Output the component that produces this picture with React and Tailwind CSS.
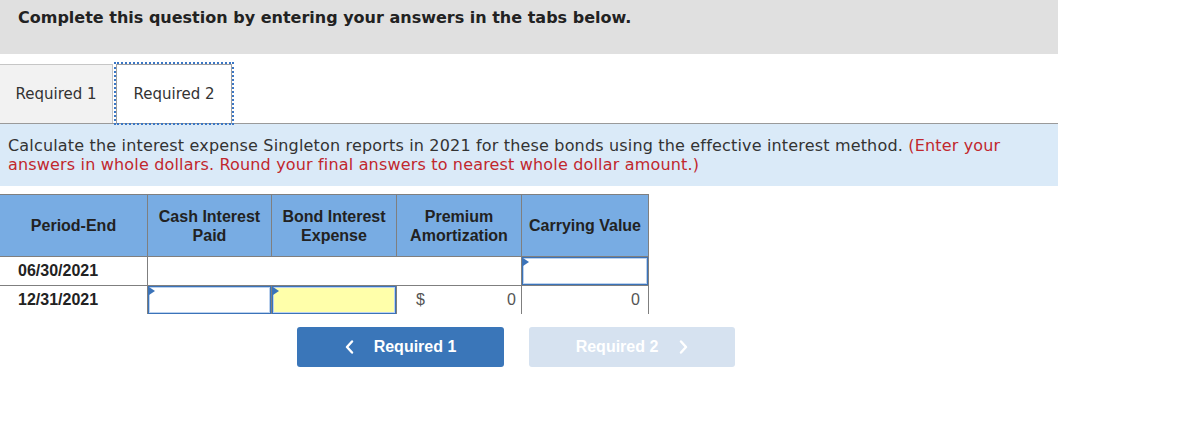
const inputBox = 'relative w-full h-full border border-[#3b73b9] shadow-[inset_0_0_0_1px_#bcd2ee]'

function Flag() {
  return (
    <span className="absolute top-0 left-0 w-0 h-0 border-y-[4px] border-y-transparent border-l-[6px] border-l-[#3b73b9]" />
  )
}

export default function App() {
  return (
    <div className="w-[1188px] h-[424px] bg-white text-[#222] font-['DejaVu_Sans',sans-serif]">
      <div className="w-[1058px]">

        {/* Header */}
        <div className="h-[54px] bg-[#e0e0e0] pl-[18px] pt-[6px] text-[16px] font-bold text-[#222]">
          Complete this question by entering your answers in the tabs below.
        </div>

        {/* Tabs */}
        <div className="mt-[8px] h-[62px] flex items-end border-b border-[#9a9a9a]">
          <div className="w-[113px] h-[59px] flex items-center justify-center bg-[#f2f2f2] border-t border-r border-[#c6c6c6] text-[15px] text-[#333]">
            Required 1
          </div>
          <div className="ml-[3px] w-[116px] h-[59px] flex items-center justify-center bg-white border-t border-x border-[#a0a0a0] outline-2 outline-dotted outline-[#3a76c4] text-[15px] text-[#333]">
            Required 2
          </div>
        </div>

        {/* Instructions */}
        <div className="bg-[#daeaf8] px-[8px] pt-[12px] pb-[12px] text-[16px] leading-[19px] tracking-[0.17px] text-[#333]">
          Calculate the interest expense Singleton reports in 2021 for these bonds using the effective interest method.{' '}
          <span className="text-[#c1272d]">(Enter your answers in whole dollars. Round your final answers to nearest whole dollar amount.)</span>
        </div>
      </div>

      {/* Table */}
      <div className="mt-[8px] w-[649px] font-['Liberation_Sans',Arial,sans-serif] text-[16px]">
        <div className="grid grid-cols-[148px_124px_125px_125px_127px] h-[63px] bg-[#78ace3] border-y border-[#7f7f7f] font-bold text-[#222] leading-[19px] text-center">
          <div className="flex items-center justify-center border-r border-[#7f7f7f]">Period-End</div>
          <div className="flex items-center justify-center border-r border-[#7f7f7f]">Cash Interest<br />Paid</div>
          <div className="flex items-center justify-center border-r border-[#7f7f7f]">Bond Interest<br />Expense</div>
          <div className="flex items-center justify-center border-r border-[#7f7f7f]">Premium<br />Amortization</div>
          <div className="flex items-center justify-center border-r border-[#7f7f7f]">Carrying Value</div>
        </div>

        <div className="grid grid-cols-[148px_374px_127px] h-[29px]">
          <div className="flex items-center pl-[18px] border-b border-r border-[#7f7f7f] font-bold text-[#222]">06/30/2021</div>
          <div className="border-b border-r border-[#7f7f7f]" />
          <div className="border-b border-r border-[#7f7f7f]">
            <div className={inputBox}><Flag /></div>
          </div>
        </div>

        <div className="grid grid-cols-[148px_124px_125px_125px_127px] h-[28px]">
          <div className="flex items-center pl-[18px] border-r border-[#7f7f7f] font-bold text-[#222]">12/31/2021</div>
          <div className="border-r border-[#7f7f7f]">
            <div className={inputBox}><Flag /></div>
          </div>
          <div className="border-r border-[#7f7f7f]">
            <div className={inputBox + ' bg-[#ffffaa]'}><Flag /></div>
          </div>
          <div className="flex items-center justify-between pl-[19px] pr-[5px] border-r border-[#7f7f7f] text-[#555]">
            <span>$</span>
            <span>0</span>
          </div>
          <div className="flex items-center justify-end pr-[8px] border-r border-[#7f7f7f] text-[#555]">0</div>
        </div>
      </div>

      {/* Navigation */}
      <div className="mt-[13px] ml-[297px] flex gap-[25px] font-['Liberation_Sans',Arial,sans-serif] text-[16px] font-bold text-white">
        <div className="w-[207px] h-[40px] flex items-center justify-center gap-[20px] rounded-[3px] bg-[#3a76b9]">
          <svg width="9" height="14" viewBox="0 0 9 14" fill="none">
            <path d="M7 1.5 2 7l5 5.5" stroke="white" strokeWidth="2.4" strokeLinecap="round" strokeLinejoin="round" />
          </svg>
          <span>Required 1</span>
        </div>
        <div className="w-[206px] h-[40px] flex items-center justify-center gap-[21px] rounded-[3px] bg-[#d6e2f0]">
          <span>Required 2</span>
          <svg width="9" height="14" viewBox="0 0 9 14" fill="none">
            <path d="M2 1.5 7 7l-5 5.5" stroke="white" strokeWidth="2.4" strokeLinecap="round" strokeLinejoin="round" />
          </svg>
        </div>
      </div>
    </div>
  )
}
